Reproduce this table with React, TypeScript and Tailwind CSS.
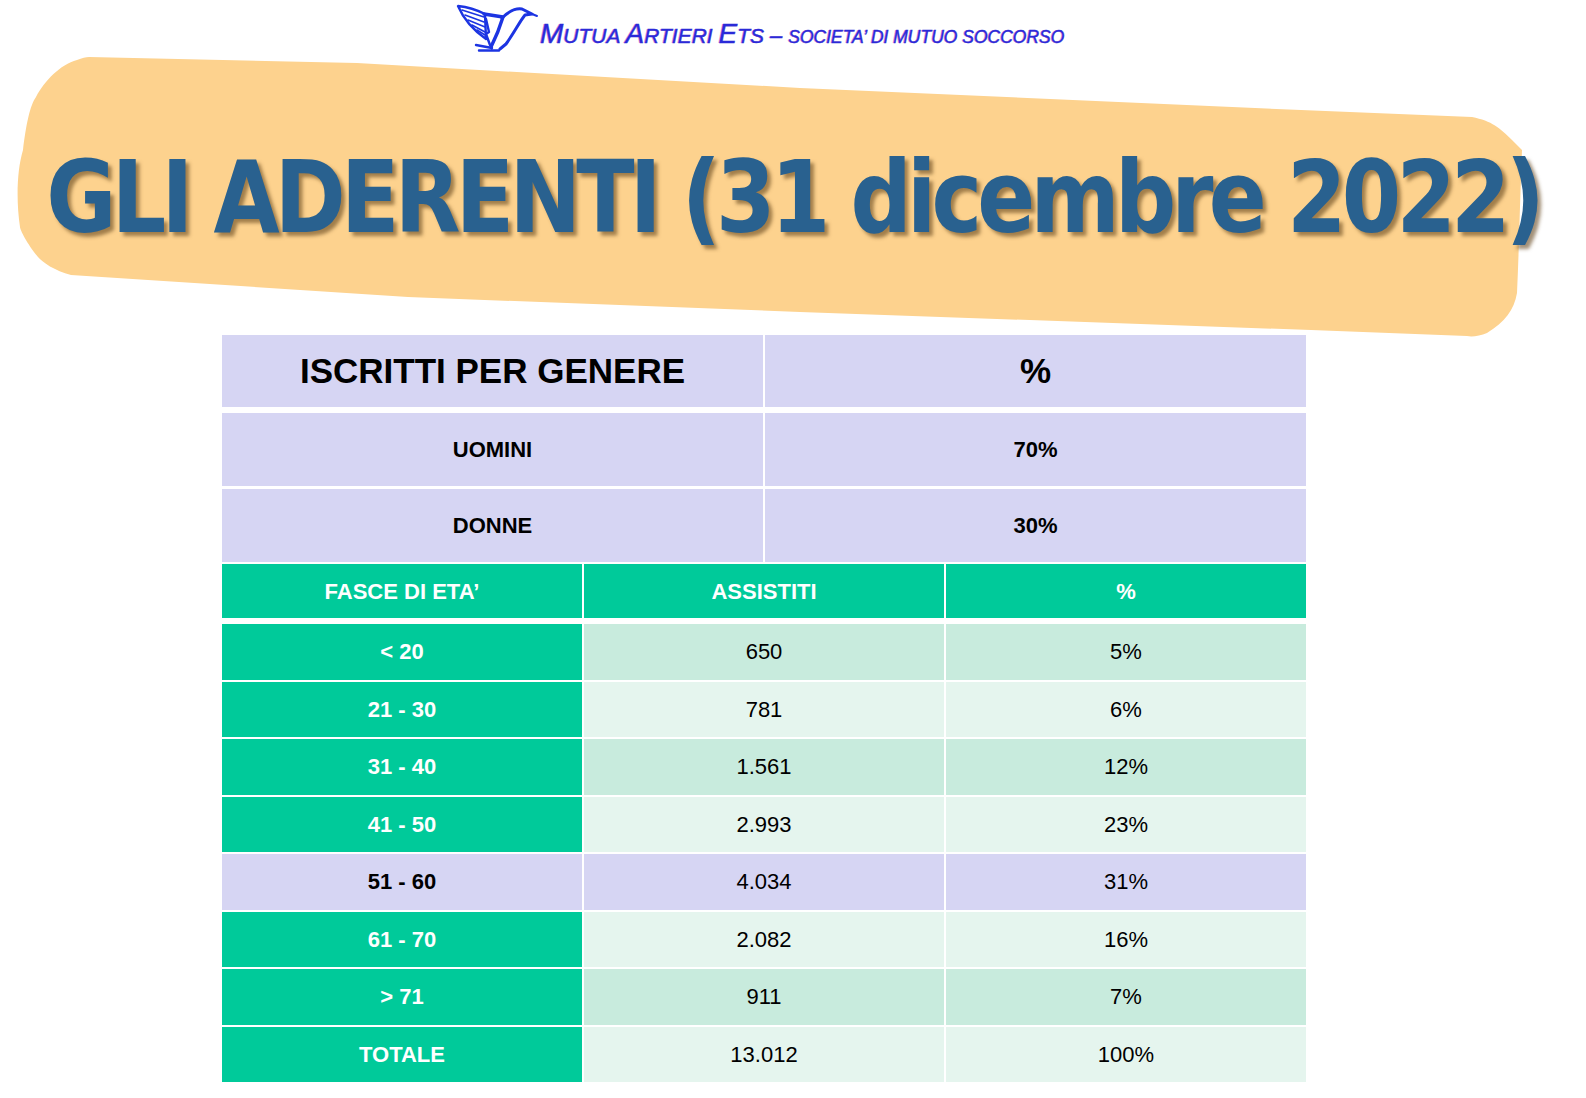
import React from "react";

const fasce = [
  { label: "< 20", n: "650", p: "5%", tone: "dark" },
  { label: "21 - 30", n: "781", p: "6%", tone: "light" },
  { label: "31 - 40", n: "1.561", p: "12%", tone: "dark" },
  { label: "41 - 50", n: "2.993", p: "23%", tone: "light" },
  { label: "51 - 60", n: "4.034", p: "31%", tone: "lilac" },
  { label: "61 - 70", n: "2.082", p: "16%", tone: "light" },
  { label: "> 71", n: "911", p: "7%", tone: "dark" },
  { label: "TOTALE", n: "13.012", p: "100%", tone: "light" },
];

const toneBg: Record<string, string> = {
  dark: "bg-[#c8ebdd]",
  light: "bg-[#e5f5ee]",
  lilac: "bg-[#d6d5f3]",
};

function Bird() {
  return (
    <svg viewBox="0 0 84 50" className="w-[84px] h-[50px]" fill="none" stroke="#1c34e2" strokeLinejoin="round" strokeLinecap="round">
      {/* wing */}
      <path d="M3 3 C12 4 22 7 30 11 L31 36 C21 29 9 17 3 3 Z" strokeWidth="2.4" />
      <path d="M7 7 L29 14 M10 12 L29 19 M13 17 L30 24 M17 22 L30 29 M22 27 L30 32" strokeWidth="1.6" />
      {/* body */}
      <path d="M29 11 L48 14 C45 24 41 34 36 44" strokeWidth="3.4" />
      <path d="M31 16 L34 29 L31 31 L35 42" strokeWidth="2.4" />
      {/* neck and head */}
      <path d="M47 15 C53 9 60 5 67 6 L77 11 L70 12 C65 18 59 30 51 41 L45 46" strokeWidth="3" />
      <path d="M77 11 L82 13" strokeWidth="2" />
      {/* tail */}
      <path d="M21 42 L37 45 M24 47.5 L44 47.5" strokeWidth="2.4" />
    </svg>
  );
}

function Brush() {
  return (
    <svg
      className="absolute left-0 top-0 w-full h-[282px]"
      viewBox="0 56 1586 282"
      preserveAspectRatio="none"
    >
      <path
        fill="#fdd28e"
        d="M89 57 L357 63 L800 88 L1301 110 L1472 117 C1492 121 1500 128 1512 140 L1522 150 C1520 200 1519 250 1517 293 C1514 310 1505 322 1487 333 C1480 336 1472 337 1467 336 L1311 330 L800 312 L408 297 L71 275 C55 271 42 262 38 257 C28 245 20 230 20 227 C16 200 17 170 23 150 C26 125 30 105 36 97 C45 80 60 65 77 60 C82 58 86 57 89 57 Z"
      />
    </svg>
  );
}

export default function App() {
  return (
    <div className="w-[1586px] h-[1098px] bg-white overflow-hidden font-['Liberation_Sans',Arial,sans-serif]">
      {/* logo line */}
      <div className="h-[56px] pl-[455px] pt-[3px] flex items-start gap-[1px]">
        <Bird />
        <div className="mt-[17px] italic text-[#2a2ad8] [text-shadow:-1px_0_0_rgba(210,40,120,0.45)] whitespace-nowrap leading-none [-webkit-text-stroke:0.4px_#2a2ad8]">
          <span className="text-[28px]">M</span>
          <span className="text-[21px]">UTUA </span>
          <span className="text-[28px]">A</span>
          <span className="text-[21px]">RTIERI </span>
          <span className="text-[28px]">E</span>
          <span className="text-[21px]">TS </span>
          <span className="text-[22px]">– </span>
          <span className="text-[17.5px]">SOCIETA’ DI MUTUO SOCCORSO</span>
        </div>
      </div>

      {/* title */}
      <div className="relative h-[279px]">
        <Brush />
        <div className="relative pt-[92px] flex justify-center">
          <h1 className="inline-block scale-x-[0.95] tracking-[-5px] leading-none whitespace-nowrap text-[100px] font-bold text-[#29618f] font-['DejaVu_Sans_Condensed','DejaVu_Sans',sans-serif] [text-shadow:4px_4px_4px_rgba(100,70,30,0.6)]">
            GLI ADERENTI (31 dicembre 2022)
          </h1>
        </div>
      </div>

      {/* table */}
      <div className="ml-[222px] w-[1084px] text-black">
        <div className="grid grid-cols-2 gap-x-[2px] bg-white">
          <div className="h-[72px] bg-[#d6d5f3] flex items-center justify-center text-[35px] font-bold">
            ISCRITTI PER GENERE
          </div>
          <div className="h-[72px] bg-[#d6d5f3] flex items-center justify-center text-[35px] font-bold">
            %
          </div>
        </div>
        <div className="mt-[6px] grid grid-cols-2 gap-x-[2px] gap-y-[3px]">
          {[
            ["UOMINI", "70%"],
            ["DONNE", "30%"],
          ].map(([g, p]) => (
            <React.Fragment key={g}>
              <div className="h-[73px] bg-[#d6d5f3] flex items-center justify-center text-[22px] font-bold">
                {g}
              </div>
              <div className="h-[73px] bg-[#d6d5f3] flex items-center justify-center text-[22px] font-bold">
                {p}
              </div>
            </React.Fragment>
          ))}
        </div>

        <div className="mt-[2px] grid grid-cols-3 gap-x-[2px] text-white text-[22px] font-bold">
          <div className="h-[54px] bg-[#00ca9a] flex items-center justify-center">FASCE DI ETA’</div>
          <div className="h-[54px] bg-[#00ca9a] flex items-center justify-center">ASSISTITI</div>
          <div className="h-[54px] bg-[#00ca9a] flex items-center justify-center">%</div>
        </div>

        <div className="mt-[6px] grid grid-cols-3 gap-x-[2px] gap-y-[2px] text-[22px]">
          {fasce.map((r) => (
            <React.Fragment key={r.label}>
              <div
                className={
                  r.tone === "lilac"
                    ? "h-[55.5px] bg-[#d6d5f3] flex items-center justify-center font-bold text-black"
                    : "h-[55.5px] bg-[#00ca9a] flex items-center justify-center font-bold text-white"
                }
              >
                {r.label}
              </div>
              <div className={`h-[55.5px] ${toneBg[r.tone]} flex items-center justify-center`}>{r.n}</div>
              <div className={`h-[55.5px] ${toneBg[r.tone]} flex items-center justify-center`}>{r.p}</div>
            </React.Fragment>
          ))}
        </div>
      </div>
    </div>
  );
}
